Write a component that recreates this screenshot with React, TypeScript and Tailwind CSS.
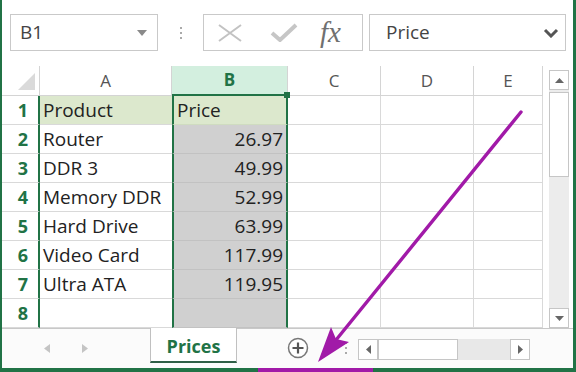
import React from "react";

const GREEN = "#217346";

const rows: [string, string][] = [
  ["Product", "Price"],
  ["Router", "26.97"],
  ["DDR 3", "49.99"],
  ["Memory DDR", "52.99"],
  ["Hard Drive", "63.99"],
  ["Video Card", "117.99"],
  ["Ultra ATA", "119.95"],
  ["", ""],
];

const Toolbar = () => (
  <div className="flex h-[66px] items-start pt-[14px] text-[19px] text-[#444]">
    {/* name box */}
    <div className="ml-[8px] flex h-[37px] w-[148px] items-center justify-between border border-[#c9c9c9] pl-[9px] pr-[10px]">
      <span>B1</span>
      <svg width="10" height="6" viewBox="0 0 10 6">
        <polygon points="0,0 10,0 5,6" fill="#8a8a8a" />
      </svg>
    </div>
    <div className="flex h-[37px] w-[45px] flex-col items-center justify-center gap-[3px]">
      <span className="h-[2px] w-[2px] bg-[#aaa]" />
      <span className="h-[2px] w-[2px] bg-[#aaa]" />
      <span className="h-[2px] w-[2px] bg-[#aaa]" />
    </div>
    {/* cancel / enter / fx */}
    <div className="flex h-[37px] w-[160px] items-center border border-[#c9c9c9] pl-[14px]">
      <svg width="24" height="18" viewBox="0 0 24 18">
        <path d="M1 1 L23 17 M23 1 L1 17" stroke="#c2c2c2" strokeWidth="2" />
      </svg>
      <svg className="ml-[28px]" width="28" height="19" viewBox="0 0 28 19">
        <path d="M2 10 L10 17 L26 2" stroke="#c6c6c6" strokeWidth="4" fill="none" />
      </svg>
      <span className="ml-[22px] font-['Liberation_Serif',serif] text-[29px] italic leading-none text-[#707070]">
        fx
      </span>
    </div>
    {/* formula bar */}
    <div className="ml-[6px] flex h-[37px] w-[197px] items-center justify-between border border-[#c9c9c9] pl-[16px] pr-[6px]">
      <span>Price</span>
      <svg width="16" height="10" viewBox="0 0 16 10">
        <path d="M2 2 L8 8 L14 2" stroke="#555" strokeWidth="3" fill="none" />
      </svg>
    </div>
  </div>
);

const HeaderRow = () => (
  <div className="flex h-[30px] text-[17px] text-[#555]">
    <div className="flex w-[38px] items-end justify-end border-r border-b border-[#d4d4d4] pr-[4px] pb-[5px]">
      <svg width="17" height="17" viewBox="0 0 17 17">
        <polygon points="17,0 17,17 0,17" fill="#dadada" />
      </svg>
    </div>
    <div className="flex w-[132px] items-center justify-center border-r border-b border-[#d4d4d4]">A</div>
    <div className="relative flex w-[116px] items-center justify-center border-r border-r-[#d4d4d4] border-b-2 border-b-[#217346] bg-[#d3efdf] font-bold text-[#217346]">
      B
      <span className="absolute -right-[3px] -bottom-[4px] h-[6px] w-[6px] bg-[#217346]" />
    </div>
    <div className="flex w-[93px] items-center justify-center border-r border-b border-[#d4d4d4]">C</div>
    <div className="flex w-[93px] items-center justify-center border-r border-b border-[#d4d4d4]">D</div>
    <div className="flex w-[69px] items-center justify-center border-r border-b border-[#d4d4d4]">E</div>
  </div>
);

const DataRow = ({ n, a, b }: { n: number; a: string; b: string }) => {
  const head = n === 1;
  return (
    <div className="flex h-[29px] text-[19px] text-[#222]">
      <div
        className="flex w-[38px] items-center justify-center border-b border-b-[#d9d9d9] border-r-2 pl-[6px] text-[18px] font-bold"
        style={{ borderRightColor: GREEN, color: GREEN }}
      >
        {n}
      </div>
      <div
        className={`flex w-[132px] items-center border-b border-[#d9d9d9] pl-[3px] ${
          head ? "bg-[#dce8cd]" : "bg-white"
        }`}
      >
        {a}
      </div>
      <div
        className={`flex w-[116px] items-center border-x-2 border-x-[#217346] border-b ${
          head
            ? "justify-start bg-[#dce8cd] border-b-[#cfdcc0] pl-[3px]"
            : "justify-end bg-[#d0d0d0] border-b-[#c2c2c2] pr-[3px]"
        }`}
      >
        {b}
      </div>
      <div className="w-[93px] border-r border-b border-[#d9d9d9]" />
      <div className="w-[93px] border-r border-b border-[#d9d9d9]" />
      <div className="w-[69px] border-r border-b border-[#d9d9d9]" />
    </div>
  );
};

const VScroll = () => (
  <div className="flex w-[30px] flex-col pl-[6px] pr-[4px] pt-[4px]">
    <div className="flex h-[20px] items-center justify-center border border-[#c6c6c6] bg-white">
      <svg width="9" height="5" viewBox="0 0 9 5">
        <polygon points="0,5 9,5 4.5,0" fill="#666" />
      </svg>
    </div>
    <div className="flex flex-1 flex-col bg-[#ececec] pt-[2px]">
      <div className="h-[85px] border border-[#c6c6c6] bg-white" />
      <div className="flex-1" />
    </div>
    <div className="flex h-[20px] items-center justify-center border border-[#c6c6c6] bg-white">
      <svg width="9" height="5" viewBox="0 0 9 5">
        <polygon points="0,0 9,0 4.5,5" fill="#666" />
      </svg>
    </div>
  </div>
);

const TabBar = () => (
  <div className="flex h-[40px] items-start border-t border-[#c8c8c8] bg-[#fbfbfb]">
    <div className="flex h-[38px] w-[148px] items-center pl-[42px]">
      <svg width="6" height="9" viewBox="0 0 6 9">
        <polygon points="6,0 6,9 0,4.5" fill="#c4c4c4" />
      </svg>
      <svg className="ml-[32px]" width="6" height="9" viewBox="0 0 6 9">
        <polygon points="0,0 0,9 6,4.5" fill="#c4c4c4" />
      </svg>
    </div>
    <div className="-mt-px flex h-[35px] w-[87px] items-center justify-center border-x border-x-[#c0c0c0] border-b-2 border-b-[#2f5f47] bg-white pt-[3px] text-[18px] font-bold text-[#217346]">
      Prices
    </div>
    <div className="flex h-[38px] w-[121px] items-center pl-[50px]">
      <svg width="22" height="22" viewBox="0 0 22 22">
        <circle cx="11" cy="11" r="9.5" stroke="#777" strokeWidth="1.5" fill="white" />
        <path d="M11 5.5 V16.5 M5.5 11 H16.5" stroke="#555" strokeWidth="2.2" />
      </svg>
      <div className="ml-[36px] flex flex-col gap-[3px]">
        <span className="h-[2px] w-[2px] bg-[#aaa]" />
        <span className="h-[2px] w-[2px] bg-[#aaa]" />
        <span className="h-[2px] w-[2px] bg-[#aaa]" />
      </div>
    </div>
    {/* horizontal scrollbar */}
    <div className="mt-[10px] flex h-[21px] w-[172px]">
      <div className="flex w-[20px] items-center justify-center border border-[#c6c6c6] bg-white">
        <svg width="5" height="9" viewBox="0 0 5 9">
          <polygon points="5,0 5,9 0,4.5" fill="#666" />
        </svg>
      </div>
      <div className="w-[80px] border border-[#c6c6c6] bg-white" />
      <div className="flex-1 bg-[#e8e8e8]" />
      <div className="flex w-[20px] items-center justify-center border border-[#c6c6c6] bg-white">
        <svg width="5" height="9" viewBox="0 0 5 9">
          <polygon points="0,0 0,9 5,4.5" fill="#666" />
        </svg>
      </div>
    </div>
  </div>
);

export default function App() {
  return (
    <div className="relative h-[372px] w-[576px] border-l-2 border-r-[3px] border-b-4 border-[#217346] bg-white font-['Open_Sans',sans-serif]">
      <Toolbar />
      <div className="flex">
        <div className="flex flex-col">
          <HeaderRow />
          {rows.map((r, i) => (
            <DataRow key={i} n={i + 1} a={r[0]} b={r[1]} />
          ))}
        </div>
        <VScroll />
      </div>
      <TabBar />

      {/* purple annotation arrow */}
      <svg className="pointer-events-none absolute -left-[2px] top-0" width="576" height="372" viewBox="0 0 576 372">
        <line x1="521" y1="112" x2="336" y2="340" stroke="#a11aa8" strokeWidth="3.4" strokeLinecap="round" />
        <polygon points="318,362 331,327 336,339 349,342" fill="#a11aa8" />
      </svg>
      <div className="absolute -bottom-[4px] left-[256px] h-[4px] w-[115px] bg-[#a11aa8]" />
    </div>
  );
}
